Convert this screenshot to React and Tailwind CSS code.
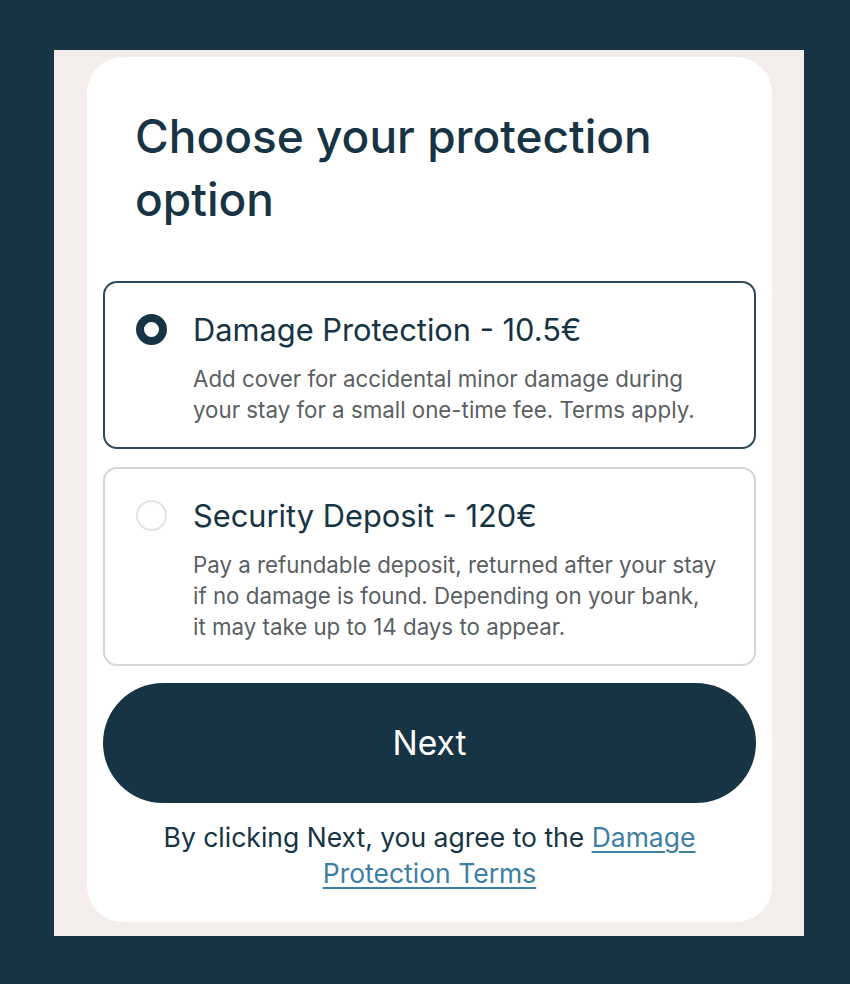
import { useState } from 'react';

const options = [
    {
        id: 'protection',
        title: 'Damage Protection - 10.5€',
        lines: ['Add cover for accidental minor damage during', 'your stay for a small one-time fee. Terms apply.'],
    },
    {
        id: 'deposit',
        title: 'Security Deposit - 120€',
        lines: [
            'Pay a refundable deposit, returned after your stay',
            'if no damage is found. Depending on your bank,',
            'it may take up to 14 days to appear.',
        ],
    },
];

const App = () => {
    const [selected, setSelected] = useState('protection');

    return (
        <div className="min-h-screen bg-[#173445] pt-[50px] pl-[54px] font-['Inter',sans-serif]">
            <div className="w-[750px] h-[886px] bg-[#f3eeeb] pt-[7px] pl-[33px]">
                <div className="w-[685px] h-[865px] bg-white rounded-[36px] px-4 pt-[48px]">
                    <h1 className="px-8 text-[46px] leading-[63px] font-medium text-[#173445]">
                        Choose your protection option
                    </h1>

                    <div className="mt-[50px] flex flex-col gap-[18px]">
                        {options.map((opt) => {
                            const active = selected === opt.id;
                            return (
                                <button
                                    key={opt.id}
                                    onClick={() => setSelected(opt.id)}
                                    className={`flex items-start gap-[26px] text-left rounded-[14px] bg-white pl-[31px] pr-4 pt-[28px] pb-[22px] border-2 ${active ? 'border-[#2b4a5c]' : 'border-[#d6d6d6]'}`}
                                >
                                    <span
                                        className={`mt-[3px] w-[31px] h-[31px] shrink-0 rounded-full ${active ? 'border-[8px] border-[#173445]' : 'border-2 border-[#e4e4e4]'}`}
                                    ></span>
                                    <span className="flex flex-col">
                                        <span className="text-[30.8px] leading-[38px] text-[#173445]">{opt.title}</span>
                                        <span className="mt-[14px] flex flex-col text-[22.3px] leading-[31px] text-[#5a5f63] whitespace-nowrap">
                                            {opt.lines.map((line) => (
                                                <span key={line}>{line}</span>
                                            ))}
                                        </span>
                                    </span>
                                </button>
                            );
                        })}
                    </div>

                    <button className="mt-[17px] w-full h-[120px] rounded-full bg-[#173445] text-white text-[33.5px]">
                        Next
                    </button>

                    <p className="mt-[16px] px-10 text-center text-[26.5px] leading-[36px] text-[#173445]">
                        By clicking Next, you agree to the{' '}
                        <a href="#" className="text-[#3e7fa3] underline underline-offset-4">Damage Protection Terms</a>
                    </p>
                </div>
            </div>
        </div>
    );
};

export default App;
